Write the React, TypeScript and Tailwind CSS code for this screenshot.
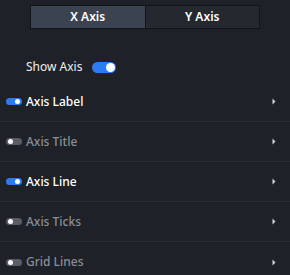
import React, { useState } from 'react';

const ROWS = [
  { label: 'Axis Label', on: true },
  { label: 'Axis Title', on: false },
  { label: 'Axis Line', on: true },
  { label: 'Axis Ticks', on: false },
  { label: 'Grid Lines', on: false },
];

const Chevron = () => (
  <svg width="4" height="7" viewBox="0 0 4 7" className="text-[#c9d3e0]">
    <path d="M0.5 0.5 L3.5 3.5 L0.5 6.5 Z" fill="currentColor" />
  </svg>
);

const App: React.FC = () => {
  const [tab, setTab] = useState<'x' | 'y'>('x');
  const [showAxis, setShowAxis] = useState(true);
  const [rows, setRows] = useState(ROWS);

  return (
    <div
      className="w-[290px] h-[275px] overflow-hidden bg-[#1e2128] text-white"
      style={{ fontFamily: '"Noto Sans", "Noto Sans CJK SC", sans-serif' }}
    >
      <div className="pt-[5px] px-[30px]">
        <div className="flex h-[24px] border border-[#121418] bg-[#121418] gap-px">
          <button
            onClick={() => setTab('x')}
            className={`flex-1 text-[12px] font-semibold ${tab === 'x' ? 'bg-[#3c4350]' : 'bg-[#25282e]'}`}
          >
            X Axis
          </button>
          <button
            onClick={() => setTab('y')}
            className={`flex-1 text-[12px] font-semibold ${tab === 'y' ? 'bg-[#3c4350]' : 'bg-[#25282e]'}`}
          >
            Y Axis
          </button>
        </div>
      </div>

      <div className="flex items-center gap-[10px] pl-[26px] mt-[30px] h-[16px]">
        <span className="text-[12px] text-[#eef0f3]">Show Axis</span>
        <button
          onClick={() => setShowAxis(!showAxis)}
          className={`relative w-[24px] h-[11px] rounded-full ${showAxis ? 'bg-[#2b7bf5]' : 'bg-[#5b5e64]'}`}
        >
          <span className={`absolute top-[1px] w-[9px] h-[9px] rounded-full bg-white ${showAxis ? 'right-[1px]' : 'left-[1px]'}`} />
        </button>
      </div>

      <div className="mt-[7px]">
        {rows.map((r, i) => (
          <div
            key={r.label}
            className={`flex items-center h-[40px] pl-[6px] pr-[14px] ${i < rows.length - 1 ? 'border-b border-[#2c2f36]' : ''}`}
          >
            <button
              onClick={() => setRows(rows.map((x, j) => (j === i ? { ...x, on: !x.on } : x)))}
              className={`relative w-[16px] h-[7px] rounded-full ${r.on ? 'bg-[#2b7bf5]' : 'bg-[#5b5e64]'}`}
            >
              <span className={`absolute top-[1px] w-[5px] h-[5px] rounded-full bg-white ${r.on ? 'right-[2px]' : 'left-[2px]'}`} />
            </button>
            <span className={`ml-[4px] text-[12px] font-medium ${r.on ? 'text-white' : 'text-[#8b8e94]'}`}>{r.label}</span>
            <span className="ml-auto flex">
              <Chevron />
            </span>
          </div>
        ))}
      </div>
    </div>
  );
};

export default App;
